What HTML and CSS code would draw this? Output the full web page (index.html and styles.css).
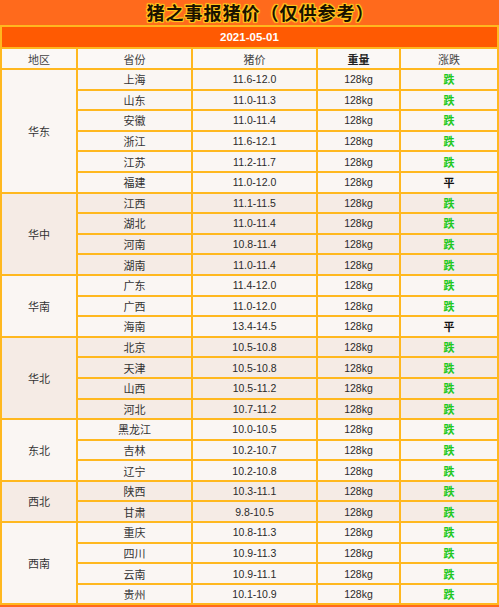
FILE: index.html
```html
<!DOCTYPE html>
<html lang="zh-CN">
<head>
<meta charset="utf-8">
<title>猪之事报猪价</title>
<link rel="stylesheet" href="styles.css">
</head>
<body>
<div class="page">
  <div class="title">猪之事报猪价（仅供参考）</div>
  <div class="tbl">
    <div class="date">2021-05-01</div>
    <div class="head">
      <div>地区</div><div>省份</div><div>猪价</div><div class="strong">重量</div><div>涨跌</div>
    </div>

    <div class="grp light">
      <div class="region s6">华东</div>
      <div>上海</div><div class="num">11.6-12.0</div><div class="num">128kg</div><div class="down">跌</div>
      <div>山东</div><div class="num">11.0-11.3</div><div class="num">128kg</div><div class="down">跌</div>
      <div>安徽</div><div class="num">11.0-11.4</div><div class="num">128kg</div><div class="down">跌</div>
      <div>浙江</div><div class="num">11.6-12.1</div><div class="num">128kg</div><div class="down">跌</div>
      <div>江苏</div><div class="num">11.2-11.7</div><div class="num">128kg</div><div class="down">跌</div>
      <div>福建</div><div class="num">11.0-12.0</div><div class="num">128kg</div><div class="flat">平</div>
    </div>

    <div class="grp dark">
      <div class="region s4">华中</div>
      <div>江西</div><div class="num">11.1-11.5</div><div class="num">128kg</div><div class="down">跌</div>
      <div>湖北</div><div class="num">11.0-11.4</div><div class="num">128kg</div><div class="down">跌</div>
      <div>河南</div><div class="num">10.8-11.4</div><div class="num">128kg</div><div class="down">跌</div>
      <div>湖南</div><div class="num">11.0-11.4</div><div class="num">128kg</div><div class="down">跌</div>
    </div>

    <div class="grp light">
      <div class="region s3">华南</div>
      <div>广东</div><div class="num">11.4-12.0</div><div class="num">128kg</div><div class="down">跌</div>
      <div>广西</div><div class="num">11.0-12.0</div><div class="num">128kg</div><div class="down">跌</div>
      <div>海南</div><div class="num">13.4-14.5</div><div class="num">128kg</div><div class="flat">平</div>
    </div>

    <div class="grp dark">
      <div class="region s4">华北</div>
      <div>北京</div><div class="num">10.5-10.8</div><div class="num">128kg</div><div class="down">跌</div>
      <div>天津</div><div class="num">10.5-10.8</div><div class="num">128kg</div><div class="down">跌</div>
      <div>山西</div><div class="num">10.5-11.2</div><div class="num">128kg</div><div class="down">跌</div>
      <div>河北</div><div class="num">10.7-11.2</div><div class="num">128kg</div><div class="down">跌</div>
    </div>

    <div class="grp light">
      <div class="region s3">东北</div>
      <div>黑龙江</div><div class="num">10.0-10.5</div><div class="num">128kg</div><div class="down">跌</div>
      <div>吉林</div><div class="num">10.2-10.7</div><div class="num">128kg</div><div class="down">跌</div>
      <div>辽宁</div><div class="num">10.2-10.8</div><div class="num">128kg</div><div class="down">跌</div>
    </div>

    <div class="grp dark">
      <div class="region s2">西北</div>
      <div>陕西</div><div class="num">10.3-11.1</div><div class="num">128kg</div><div class="down">跌</div>
      <div>甘肃</div><div class="num">9.8-10.5</div><div class="num">128kg</div><div class="down">跌</div>
    </div>

    <div class="grp light">
      <div class="region s4">西南</div>
      <div>重庆</div><div class="num">10.8-11.3</div><div class="num">128kg</div><div class="down">跌</div>
      <div>四川</div><div class="num">10.9-11.3</div><div class="num">128kg</div><div class="down">跌</div>
      <div>云南</div><div class="num">10.9-11.1</div><div class="num">128kg</div><div class="down">跌</div>
      <div>贵州</div><div class="num">10.1-10.9</div><div class="num">128kg</div><div class="down">跌</div>
    </div>
  </div>
</div>
</body>
</html>
```

FILE: styles.css
```css
* {
  box-sizing: border-box;
}

html, body {
  margin: 0;
  padding: 0;
}

body {
  width: 499px;
  height: 607px;
  background: #ff6a1c;
  font-family: "Noto Sans CJK SC", "Liberation Sans", sans-serif;
  font-size: 11px;
  color: #333;
  overflow: hidden;
}

.page {
  width: 499px;
}

.title {
  height: 25px;
  line-height: 25px;
  text-align: center;
  padding-left: 22px;
  font-size: 18px;
  font-weight: bold;
  color: #1a1200;
  letter-spacing: 1px;
  text-shadow:
    1px 0 0 #ffc21a, -1px 0 0 #ffc21a, 0 1px 0 #ffc21a, 0 -1px 0 #ffc21a,
    1px 1px 0 #ffc21a, -1px -1px 0 #ffc21a, 1px -1px 0 #ffc21a, -1px 1px 0 #ffc21a,
    0 0 3px #ffd23a;
}

.tbl {
  display: grid;
  grid-template-columns: 74px 113px 123px 81px 96px;
  grid-template-rows: 20px 19px repeat(26, 18.6px);
  gap: 2px;
  padding: 2px;
  background: #ffb81f;
}

.tbl > div > div,
.date {
  display: flex;
  align-items: center;
  justify-content: center;
  white-space: nowrap;
}

.date {
  grid-column: 1 / -1;
  background: #ff5a02;
  color: #fff;
  font-weight: bold;
  font-size: 11.5px;
  font-family: "Liberation Sans", "Noto Sans CJK SC", sans-serif;
}

.head,
.grp {
  display: contents;
}

.head > div {
  background: #fbf8f6;
  color: #444;
}

.head > .strong {
  font-weight: bold;
  color: #222;
}

.light > div {
  background: #faf6f3;
}

.dark > div {
  background: #f5ebe5;
}

.region {
  grid-column: 1;
}

.s2 { grid-row: span 2; }
.s3 { grid-row: span 3; }
.s4 { grid-row: span 4; }
.s6 { grid-row: span 6; }

.num {
  font-family: "Liberation Sans", "Noto Sans CJK SC", sans-serif;
  font-size: 10.5px;
  color: #2a2a2a;
}

.down {
  color: #22c81e;
  font-weight: bold;
}

.flat {
  color: #111;
  font-weight: bold;
}
```
